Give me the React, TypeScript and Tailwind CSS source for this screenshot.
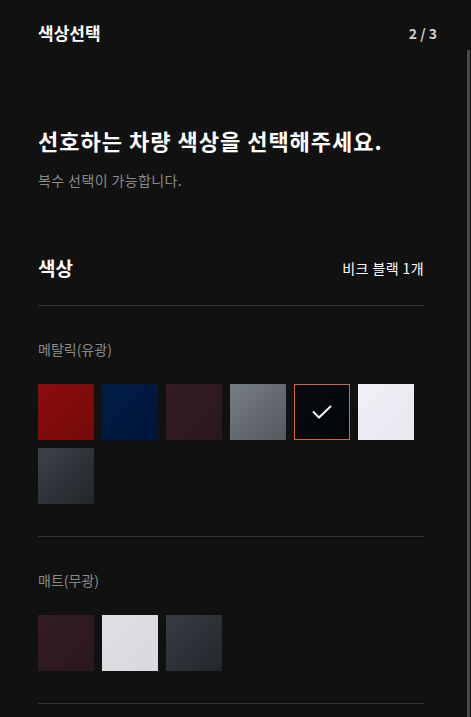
import React from "react";

type Swatch = { name: string; className: string; selected?: boolean };

const metallic: Swatch[] = [
  { name: "레드", className: "bg-gradient-to-br from-[#8c0d0d] to-[#740a0a]" },
  { name: "네이비", className: "bg-gradient-to-br from-[#001d45] to-[#00143a]" },
  { name: "버건디", className: "bg-gradient-to-br from-[#321c21] to-[#2a171c]" },
  { name: "실버", className: "bg-gradient-to-br from-[#777d84] to-[#53595f]" },
  { name: "비크 블랙", className: "bg-gradient-to-br from-[#070b10] to-[#03070b]", selected: true },
  { name: "화이트", className: "bg-gradient-to-br from-[#eff0f6] to-[#e8e9f1]" },
  { name: "그레이", className: "bg-gradient-to-br from-[#3d4249] to-[#22262b]" },
];

const matte: Swatch[] = [
  { name: "버건디", className: "bg-gradient-to-br from-[#331c22] to-[#2a171c]" },
  { name: "라이트 그레이", className: "bg-gradient-to-br from-[#e0dfe4] to-[#d9d8dd]" },
  { name: "슬레이트", className: "bg-gradient-to-br from-[#383d45] to-[#22272d]" },
];

const SwatchGrid = ({ items }: { items: Swatch[] }) => (
  <div className="mt-[25px] flex flex-wrap gap-2 w-[384px]">
    {items.map((s) => (
      <button
        key={s.name}
        aria-label={s.name}
        className={`w-14 h-14 flex items-center justify-center ${s.className} ${
          s.selected ? "border border-[#cc6a40]" : ""
        }`}
      >
        {s.selected && (
          <svg width="22" height="16" viewBox="0 0 22 16" fill="none">
            <path d="M2 7.5 L8 13.5 L20 2" stroke="#f2f2f2" strokeWidth="2" />
          </svg>
        )}
      </button>
    ))}
  </div>
);

const App: React.FC = () => {
  return (
    <div
      className="relative w-[471px] h-[717px] overflow-hidden bg-[#111111] text-white"
      style={{ fontFamily: '"Noto Sans CJK KR", "Noto Sans", sans-serif' }}
    >
      <div className="absolute right-[1px] top-[50px] bottom-0 w-[3px] bg-[#4a4a4a]"></div>

      <div className="pl-[38px] pr-[34px] pt-[21px] flex items-center justify-between">
        <h1 className="text-[17px] leading-[24px] font-bold">색상선택</h1>
        <span className="text-[14px] leading-[24px] font-bold text-[#d0d0d0]">2 / 3</span>
      </div>

      <div className="pl-[38px] pr-[47px]">
        <h2 className="mt-[80px] text-[22px] leading-[30px] font-bold tracking-[1px]">
          선호하는 차량 색상을 선택해주세요.
        </h2>
        <p className="mt-[15px] text-[14px] leading-[20px] tracking-[0.4px] text-[#8a8a8a]">
          복수 선택이 가능합니다.
        </p>

        <div className="mt-[65px] pb-[24px] flex items-center justify-between border-b border-[#333333]">
          <h3 className="text-[19px] leading-[26px] font-bold">색상</h3>
          <span className="text-[14px] leading-[26px] tracking-[0.4px]">비크 블랙 1개</span>
        </div>

        <section className="pt-[33px] pb-[32px] border-b border-[#333333]">
          <h4 className="text-[14px] leading-[20px] text-[#8a8a8a]">메탈릭(유광)</h4>
          <SwatchGrid items={metallic} />
        </section>

        <section className="pt-[33px] pb-[32px] border-b border-[#333333]">
          <h4 className="text-[14px] leading-[20px] text-[#8a8a8a]">매트(무광)</h4>
          <SwatchGrid items={matte} />
        </section>
      </div>
    </div>
  );
};

export default App;
